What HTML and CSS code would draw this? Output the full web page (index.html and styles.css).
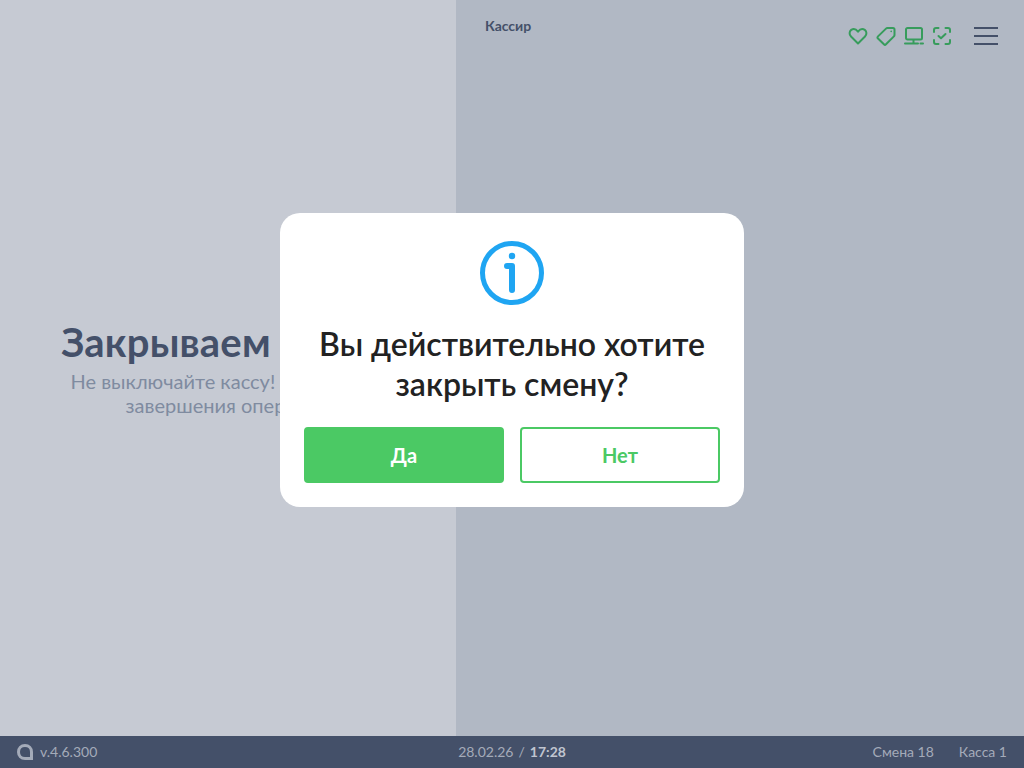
FILE: index.html
```html
<!DOCTYPE html>
<html lang="ru">
<head>
<meta charset="utf-8">
<title>Касса</title>
<link rel="stylesheet" href="styles.css">
</head>
<body>
<div class="app">
  <main class="main">
    <section class="left">
      <h1 class="left-title">Закрываем смену</h1>
      <p class="left-text">Не выключайте кассу! Дождитесь завершения операции</p>
    </section>
    <section class="right">
      <header class="top">
        <div class="cashier">Кассир</div>
        <div class="top-icons">
          <svg class="ic" viewBox="0 0 20 20"><path d="M10 17.500 3 10.500C1 8.500 1.200 5.400 3.200 3.900 5.200 2.500 8 3 10 5.600 12 3 14.800 2.500 16.800 3.900 18.800 5.400 19 8.500 17 10.500Z"/></svg>
          <svg class="ic" viewBox="0 0 20 20"><path d="M2 10.400 10 2.600C10.400 2.200 10.900 2 11.400 2H17C17.800 2 18.500 2.700 18.500 3.500V9C18.500 9.500 18.300 10 17.900 10.400L10 18.300C9.400 18.900 8.500 18.900 7.900 18.300L2 12.500C1.400 11.900 1.400 11 2 10.400Z"/><circle class="dot" cx="15.200" cy="5.400" r=".8"/></svg>
          <svg class="ic" viewBox="0 0 20 20"><path d="M3.500 2H16.500C17.300 2 18 2.700 18 3.500V12C18 12.800 17.300 13.500 16.500 13.500H3.500C2.700 13.500 2 12.800 2 12V3.500C2 2.700 2.700 2 3.500 2ZM9.500 13.500V17.500M1 17.500H14M16.500 17.500H19"/></svg>
          <svg class="ic" viewBox="0 0 20 20"><path d="M2 6V4C2 2.900 2.900 2 4 2H6.500M13.500 2H16C17.100 2 18 2.900 18 4V6M18 14V16C18 17.100 17.100 18 16 18H13.500M6.500 18H4C2.900 18 2 17.100 2 16V14M6.500 10 9 12.300 13.500 8"/></svg>
          <div class="burger"><span></span><span></span><span></span></div>
        </div>
      </header>
    </section>
  </main>
  <footer class="footer">
    <div class="foot-left">
      <svg class="logo" viewBox="0 0 16 16"><path d="M8 1.500C11.900 1.500 14.500 4.100 14.500 8V14.500H8C4.100 14.500 1.500 11.900 1.500 8 1.500 4.100 4.100 1.500 8 1.500Z"/></svg>
      <span>v.4.6.300</span>
    </div>
    <div class="foot-center">28.02.26<span class="sep">/</span><b>17:28</b></div>
    <div class="foot-right"><span>Смена 18</span><span>Касса 1</span></div>
  </footer>
  <div class="overlay">
    <div class="modal">
      <svg class="info" viewBox="0 0 64 64"><circle cx="32" cy="32" r="29.500"/><path class="stem" d="M27 25H32V49"/><circle class="dot" cx="32" cy="15" r="3.200"/></svg>
      <h2 class="modal-title">Вы действительно хотите закрыть смену?</h2>
      <div class="actions">
        <button class="btn btn-yes">Да</button>
        <button class="btn btn-no">Нет</button>
      </div>
    </div>
  </div>
</div>
</body>
</html>
```

FILE: styles.css
```css
* { box-sizing: border-box; }
html, body { margin: 0; height: 100%; }
body { font-family: Lato, "Noto Sans", sans-serif; overflow: hidden; }
.app { position: relative; width: 1024px; height: 768px; display: flex; flex-direction: column; }
.main { flex: 1; display: flex; min-height: 0; }
.left { width: 456px; background: #c6cad3; display: flex; flex-direction: column; align-items: center; padding-top: 318px; }
.left-title { margin: 0; font-size: 40px; line-height: 48px; font-weight: 700; letter-spacing: .2px; color: #445069; white-space: nowrap; }
.left-text { margin: 3px 0 0; width: 350px; text-align: center; font-size: 20px; line-height: 24px; color: #7f8ba0; }
.right { flex: 1; background: #b1b8c4; }
.top { display: flex; justify-content: space-between; padding: 17px 26px 0 29px; }
.cashier { font-size: 14px; line-height: 17px; font-weight: 700; color: #445069; }
.top-icons { display: flex; align-items: center; gap: 8px; padding-top: 9px; }
.ic { width: 20px; height: 20px; fill: none; stroke: #379c5c; stroke-width: 2; stroke-linecap: round; stroke-linejoin: round; }
.ic .dot { fill: #379c5c; stroke: none; }
.burger { width: 24px; margin-left: 14px; display: flex; flex-direction: column; gap: 6px; }
.burger span { display: block; height: 2px; background: #445069; }
.footer { height: 32px; background: #445069; display: grid; grid-template-columns: 1fr auto 1fr; align-items: center; padding: 0 17px 1px; font-size: 14px; color: #a4abb9; }
.foot-left { display: flex; align-items: center; gap: 7px; }
.logo { width: 16px; height: 16px; fill: none; stroke: #a4abb9; stroke-width: 3; }
.sep { margin: 0 5px; }
.foot-center b { font-weight: 700; color: #c0c5d0; }
.foot-right { display: flex; justify-content: flex-end; gap: 25px; }
.overlay { position: absolute; left: 0; top: 0; width: 100%; height: 720px; display: flex; align-items: center; justify-content: center; }
.modal { width: 464px; height: 294px; background: #fff; border-radius: 20px; padding: 28px 24px 24px; display: flex; flex-direction: column; align-items: center; }
.info { width: 64px; height: 64px; fill: none; stroke: #1fa5f2; stroke-width: 5; stroke-linecap: round; stroke-linejoin: round; }
.info .stem { stroke-width: 6; }
.info .dot { fill: #1fa5f2; stroke: none; }
.modal-title { margin: 19px 0 0; text-align: center; font-size: 32px; line-height: 40px; font-weight: 600; color: #222; }
.actions { margin-top: 23px; width: 100%; display: flex; gap: 16px; }
.btn { flex: 1; height: 56px; border-radius: 4px; font-family: inherit; font-size: 20px; font-weight: 700; border: 2px solid #4bc964; }
.btn-yes { background: #4bc964; color: #fff; }
.btn-no { background: #fff; color: #4bc964; }
```
